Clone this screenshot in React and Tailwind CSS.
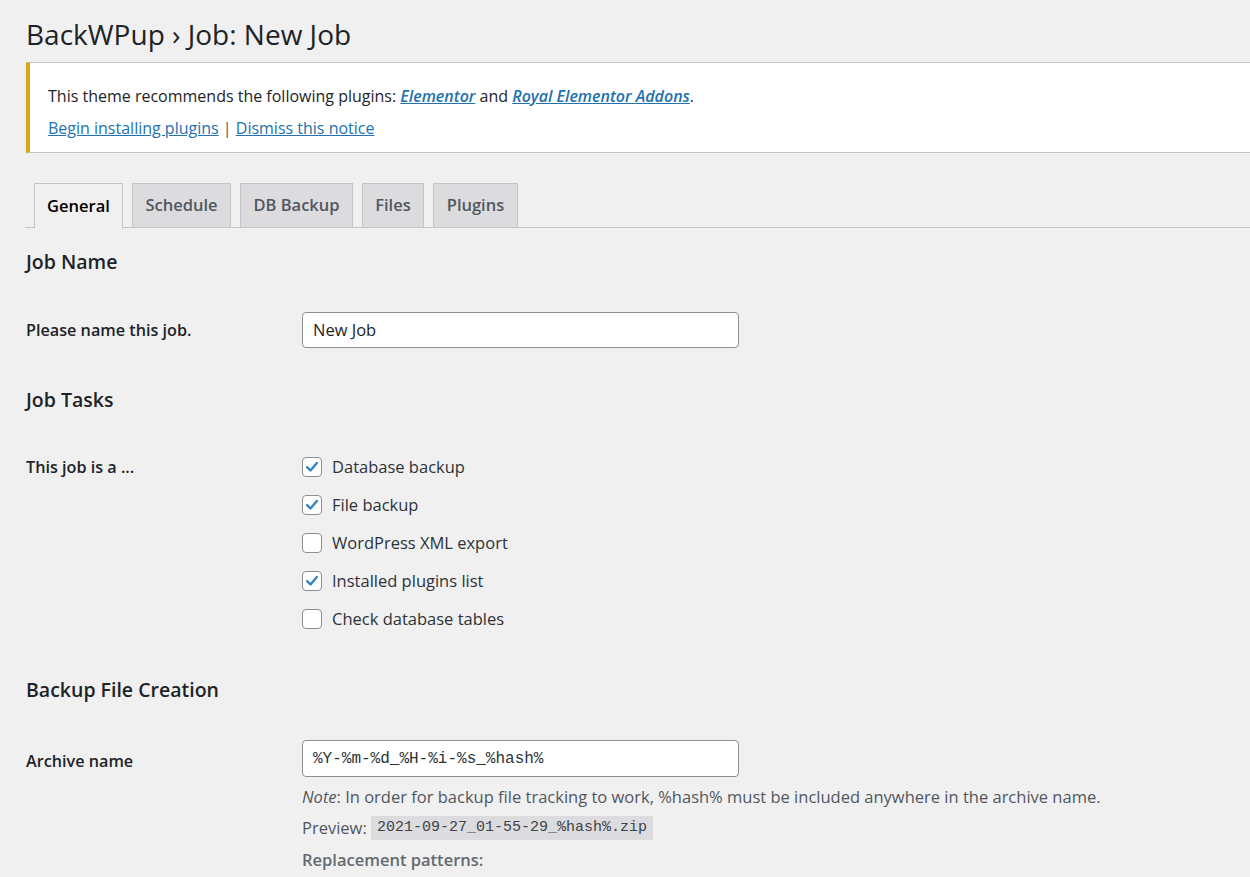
import React from 'react';

const FONT = "font-['Segoe_UI','Open_Sans',sans-serif]";

const tabs = [
  { label: 'General', w: 'w-[89px]', active: true },
  { label: 'Schedule', w: 'w-[99px]' },
  { label: 'DB Backup', w: 'w-[113px]' },
  { label: 'Files', w: 'w-[62px]' },
  { label: 'Plugins', w: 'w-[85px]' },
];

const tasks = [
  { label: 'Database backup', checked: true },
  { label: 'File backup', checked: true },
  { label: 'WordPress XML export', checked: false },
  { label: 'Installed plugins list', checked: true },
  { label: 'Check database tables', checked: false },
];

const Checkbox = ({ checked }) => (
  <span className="w-[20px] h-[20px] shrink-0 rounded-[4px] border border-[#8c8f94] bg-white flex items-center justify-center">
    {checked && (
      <svg width="20" height="20" viewBox="0 0 20 20">
        <path d="M4.6 10.2 L8.3 13.9 L15.4 5.6" fill="none" stroke="#3582c4" strokeWidth="2.7" strokeLinecap="round" strokeLinejoin="round" />
      </svg>
    )}
  </span>
);

const SectionTitle = ({ children, className = '' }) => (
  <h2 className={`text-[19.5px] leading-[28px] font-semibold text-[#1d2327] ${className}`}>{children}</h2>
);

const App = () => {
  return (
    <div className={`min-h-[877px] bg-[#f0f0f1] text-[#1d2327] ${FONT} overflow-hidden`}>
      <div className="pt-[15px] pl-[26px]">
        <h1 className="text-[28px] leading-[38px] font-normal">BackWPup › Job: New Job</h1>

        {/* notice */}
        <div className="mt-[9px] bg-white border-y border-[#c3c4c7] border-l-4 border-l-[#dba617] pl-[18px] pt-[22px] pb-[13px] text-[16px]">
          <p className="leading-[22px]">
            This theme recommends the following plugins:{' '}
            <a href="#" className="text-[#2271b1] underline italic font-semibold">Elementor</a> and{' '}
            <a href="#" className="text-[#2271b1] underline italic font-semibold">Royal Elementor Addons</a>.
          </p>
          <p className="leading-[22px] mt-[10px]">
            <a href="#" className="text-[#2271b1] underline">Begin installing plugins</a>
            <span className="text-[#50575e]"> | </span>
            <a href="#" className="text-[#2271b1] underline">Dismiss this notice</a>
          </p>
        </div>

        {/* tabs */}
        <div className="mt-[30px] -ml-[1px] pl-[9px] flex gap-[9px] border-b border-[#c3c4c7] h-[45px]">
          {tabs.map((t) => (
            <div
              key={t.label}
              className={`${t.w} flex items-center justify-center border border-[#c3c4c7] text-[16.5px] font-semibold ${
                t.active ? 'bg-[#f0f0f1] border-b-[#f0f0f1] text-black h-[46px]' : 'bg-[#dcdcde] text-[#50575e] h-[45px]'
              }`}
            >
              {t.label}
            </div>
          ))}
        </div>

        <SectionTitle className="mt-[20px]">Job Name</SectionTitle>

        <div className="mt-[36px] flex items-center">
          <div className="w-[276px] text-[16.2px] font-semibold">Please name this job.</div>
          <div className="w-[437px] h-[36px] rounded-[4px] border border-[#8c8f94] bg-white flex items-center pl-[10px] text-[16.5px]">
            New Job
          </div>
        </div>

        <SectionTitle className="mt-[38px]">Job Tasks</SectionTitle>

        <div className="mt-[34px] flex">
          <div className="w-[276px] h-[38px] flex items-center text-[16.2px] font-semibold">This job is a ...</div>
          <div className="flex flex-col">
            {tasks.map((t) => (
              <label key={t.label} className="h-[38px] flex items-center gap-[10px] text-[16.5px] text-[#2c3338]">
                <Checkbox checked={t.checked} />
                <span>{t.label}</span>
              </label>
            ))}
          </div>
        </div>

        <SectionTitle className="mt-[38px]">Backup File Creation</SectionTitle>

        <div className="mt-[36px] flex">
          <div className="w-[276px] h-[37px] flex items-center pt-[5px] text-[16.2px] font-semibold">Archive name</div>
          <div className="flex flex-col">
            <div className="w-[437px] h-[37px] rounded-[4px] border border-[#8c8f94] bg-white flex items-center pl-[10px] text-[16px] text-[#2c3338] font-['Liberation_Mono',monospace]">
              %Y-%m-%d_%H-%i-%s_%hash%
            </div>
            <p className="mt-[6px] leading-[28px] text-[16.5px] text-[#50575e]">
              <em>Note</em>: In order for backup file tracking to work, %hash% must be included anywhere in the archive name.
            </p>
            <p className="mt-[3px] leading-[28px] text-[16.5px] text-[#50575e] flex items-center">
              Preview:&nbsp;
              <code className="bg-[#dcdcde] h-[24px] px-[6px] flex items-center text-[15px] text-[#3c434a] font-['Liberation_Mono',monospace]">
                2021-09-27_01-55-29_%hash%.zip
              </code>
            </p>
            <p className="mt-[4px] leading-[28px] text-[16.5px] font-semibold text-[#646970]">Replacement patterns:</p>
          </div>
        </div>
      </div>
    </div>
  );
};

export default App;
